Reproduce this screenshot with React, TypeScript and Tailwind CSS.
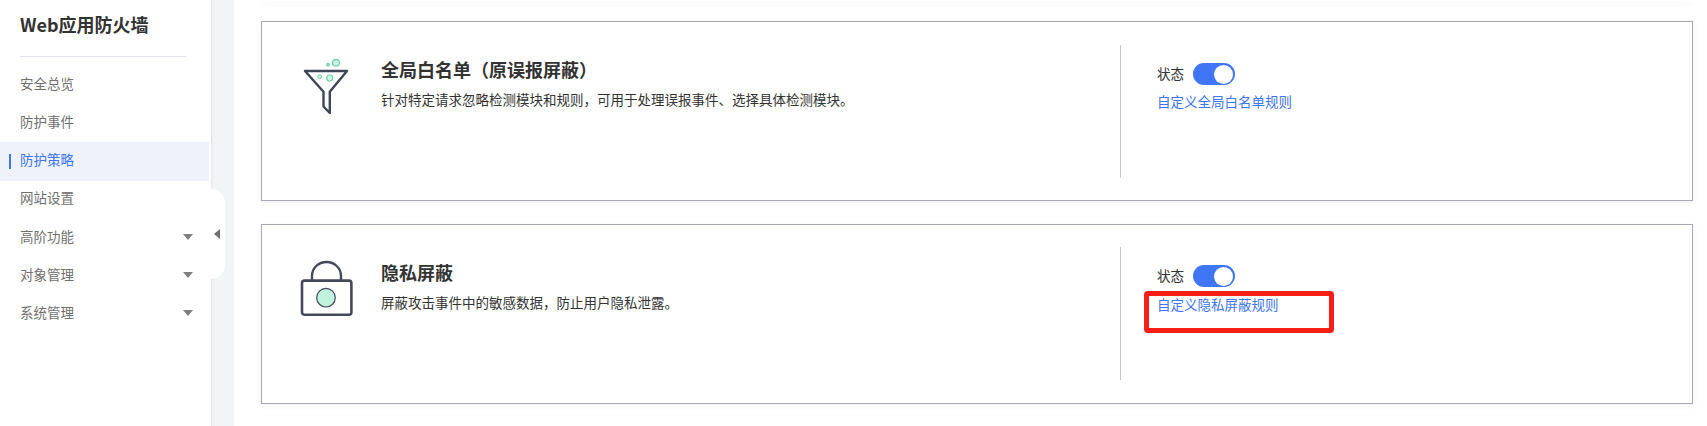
import React from "react";

const font = { fontFamily: '"Noto Sans CJK SC", sans-serif' };

function Caret() {
  return <span className="mr-[18px] h-0 w-0 border-x-[5px] border-t-[6px] border-x-transparent border-t-[#7f7f7f]" />;
}

function MenuItem({ label, active, caret }: { label: string; active?: boolean; caret?: boolean }) {
  return (
    <div className={`relative flex items-center justify-between pl-5 text-[13.5px] ${active ? "mr-[2px] -mb-px h-[39px] bg-[#eff2fb] text-[#4075f5]" : "h-[38px] text-[#707070]"}`}>
      {active && <span className="absolute left-[9px] top-[12px] h-[15px] w-[2px] bg-[#4075f5]" />}
      <span className={caret ? "pb-[2px]" : "pb-[4px]"}>{label}</span>
      {caret && <Caret />}
    </div>
  );
}

function Funnel() {
  return (
    <svg width="48" height="60" viewBox="0 0 48 60" fill="none" className="shrink-0">
      <path d="M2 13H44L26.8 33.7V55L20.5 48.5V33.7Z" stroke="#3f4657" strokeWidth="2.4" strokeLinejoin="round" />
      <circle cx="33" cy="4.7" r="3.4" fill="#cdf3e2" stroke="#6fcfa8" strokeWidth="1.2" />
      <circle cx="25" cy="6.7" r="1.6" fill="#8fdcbc" stroke="#6fcfa8" strokeWidth="0.8" />
      <circle cx="16.7" cy="18.7" r="1.9" fill="#cdf3e2" stroke="#6fcfa8" strokeWidth="1" />
      <circle cx="26.7" cy="20" r="3" fill="#cdf3e2" stroke="#6fcfa8" strokeWidth="1.2" />
    </svg>
  );
}

function Lock() {
  return (
    <svg width="54" height="57" viewBox="0 0 54 57" fill="none" className="shrink-0">
      <path d="M12 20V16C12 8 18.5 2 26.5 2C34.5 2 41 8 41 16V20" stroke="#444a5c" strokeWidth="2.4" />
      <rect x="2" y="20.6" width="49.4" height="34.2" rx="2.5" fill="#fff" stroke="#444a5c" strokeWidth="2.6" />
      <circle cx="26" cy="37.7" r="9.3" fill="#bff3de" stroke="#444a5c" strokeWidth="1.2" />
    </svg>
  );
}

function Toggle() {
  return (
    <span className="flex h-[22px] w-[42px] items-center justify-end rounded-full bg-[#4075f5] pr-[2px]">
      <span className="h-[19px] w-[19px] rounded-full bg-white" />
    </span>
  );
}

function Card({ icon, iconClass, title, desc, link, boxed }: { icon: React.ReactNode; iconClass: string; title: string; desc: string; link: string; boxed?: boolean }) {
  return (
    <section className="flex h-[180px] border border-[#a8a8b4] bg-white shadow-[0_2px_6px_rgba(90,90,110,0.08)]">
      <div className={`flex w-[119px] items-start ${iconClass}`}>{icon}</div>
      <div className="flex-1 pt-[32px]">
        <h2 className="text-[18px] font-bold leading-[30px] text-[#333333]">{title}</h2>
        <p className="mt-[5px] text-[13.5px] leading-[20px] text-[#333333]">{desc}</p>
      </div>
      <div className={`mr-[402px] flex h-[133px] w-[170px] flex-col border-l border-[#c8c8c8] pl-9 pt-[18px] ${boxed ? "mt-[22px]" : "mt-[23px]"}`}>
        <div className="flex h-[22px] items-center gap-[9px] text-[13.5px] text-[#333333]">
          <span className="pb-[2px]">状态</span>
          <Toggle />
        </div>
        <div className={`relative whitespace-nowrap text-[13.5px] leading-[20px] text-[#4075f5] ${boxed ? "mt-[7px]" : "mt-[6px]"}`}>
          {link}
          {boxed && <span className="absolute -left-[13px] -top-[3px] h-[42px] w-[190px] rounded-[4px] border-[5px] border-[#fa1e14]" />}
        </div>
      </div>
    </section>
  );
}

export default function App() {
  return (
    <div className="flex h-[426px] w-[1707px] overflow-hidden bg-white" style={font}>
      <aside className="relative w-[211px] shrink-0 bg-white">
        <div className="ml-5 h-[57px] w-[166px] border-b border-[#e3e4ee] pt-[10px] text-[18px] font-bold leading-[28px] text-[#333333]">
          Web应用防火墙
        </div>
        <nav className="mt-[9px]">
          <MenuItem label="安全总览" />
          <MenuItem label="防护事件" />
          <MenuItem label="防护策略" active />
          <MenuItem label="网站设置" />
          <MenuItem label="高阶功能" caret />
          <MenuItem label="对象管理" caret />
          <MenuItem label="系统管理" caret />
        </nav>
      </aside>
      <div className="relative w-[23px] shrink-0 bg-[#f3f4f6] shadow-[inset_3px_0_3px_-2px_rgba(120,120,140,0.12)]">
        <div className="absolute left-0 top-[189px] flex h-[90px] w-[14px] items-center justify-end rounded-r-[14px] bg-white pr-[5px]">
          <span className="h-0 w-0 border-y-[5px] border-r-[6px] border-y-transparent border-r-[#6f6f6f]" />
        </div>
      </div>
      <main className="flex-1 bg-white pl-[27px] pr-[14px]">
        <div className="mb-[20px] h-px bg-white shadow-[0_2px_5px_rgba(90,90,110,0.1)]" />
        <div className="flex flex-col gap-[23px]">
          <Card icon={<Funnel />} iconClass="pl-[41px] pt-[36px]" title="全局白名单（原误报屏蔽）" desc="针对特定请求忽略检测模块和规则，可用于处理误报事件、选择具体检测模块。" link="自定义全局白名单规则" />
          <Card icon={<Lock />} iconClass="pl-[38px] pt-[35px]" title="隐私屏蔽" desc="屏蔽攻击事件中的敏感数据，防止用户隐私泄露。" link="自定义隐私屏蔽规则" boxed />
        </div>
      </main>
    </div>
  );
}
